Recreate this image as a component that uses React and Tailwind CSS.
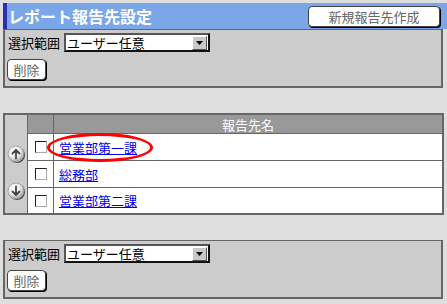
import React from "react";

const Button = ({ children, className = "" }) => (
  <div
    className={`flex items-center justify-center h-[21px] bg-white rounded-[4px] border border-[#444] shadow-[1px_1px_0_#000] text-[13px] leading-none text-[#666] ${className}`}
  >
    {children}
  </div>
);

const Select = ({ value }) => (
  <div className="flex items-center w-[146px] h-[19px] bg-white border-2 border-t-[#555] border-l-[#555] border-r-[#111] border-b-[#111]">
    <span className="flex-1 pl-[1px] text-[13px] leading-none text-black">{value}</span>
    <div className="flex items-center justify-center w-[15px] h-[14px] mr-[1px] bg-[#c8c8c8] border border-t-white border-l-white border-r-[#555] border-b-[#555]">
      <svg width="7" height="4" viewBox="0 0 7 4">
        <path d="M0 0 H7 L3.5 4 Z" fill="#000" />
      </svg>
    </div>
  </div>
);

const RangePanel = () => (
  <div className="w-[440px] h-[59px] bg-[#cccccc] border-2 border-t border-[#666] px-[3px] pt-[3px] flex flex-col gap-[7px]">
    <div className="flex items-center gap-[4px]">
      <span className="text-[13px] leading-none text-black">選択範囲</span>
      <Select value="ユーザー任意" />
    </div>
    <Button className="w-[39px] ml-[-1px]">削除</Button>
  </div>
);

const ArrowCircle = ({ down }) => (
  <svg width="19" height="19" viewBox="0 0 19 19">
    <defs>
      <radialGradient id={down ? "gd" : "gu"} cx="40%" cy="35%" r="65%">
        <stop offset="0%" stopColor="#ffffff" />
        <stop offset="60%" stopColor="#e8e8e8" />
        <stop offset="100%" stopColor="#a0a0a0" />
      </radialGradient>
    </defs>
    <circle cx="10" cy="10" r="8" fill="#444" />
    <circle cx="9" cy="9" r="8" fill={`url(#${down ? "gd" : "gu"})`} stroke="#999" strokeWidth="0.8" />
    {down ? (
      <path d="M9 4.5 V13 M5.5 9.5 L9 13 L12.5 9.5" stroke="#444" strokeWidth="1.8" fill="none" strokeLinecap="round" strokeLinejoin="round" />
    ) : (
      <path d="M9 13.5 V5 M5.5 8.5 L9 5 L12.5 8.5" stroke="#444" strokeWidth="1.8" fill="none" strokeLinecap="round" strokeLinejoin="round" />
    )}
  </svg>
);

const Checkbox = () => (
  <div className="w-[12px] h-[12px] bg-white border border-t-[#222] border-l-[#222] border-r-[#aaa] border-b-[#aaa]" />
);

const rows = ["営業部第一課", "総務部", "営業部第二課"];

export default function App() {
  return (
    <div className="w-[447px] h-[304px] bg-[#dedede] pt-[3px] pl-[3px] font-['Noto_Sans_CJK_JP',sans-serif] overflow-hidden">
      {/* Title bar */}
      <div className="flex items-center justify-between h-[26px] bg-[#7ba6e8] border-l-4 border-[#2c2cb4] pr-[7px]">
        <span className="pl-[1px] text-white text-[16px] font-bold leading-none">レポート報告先設定</span>
        <Button className="w-[132px]">新規報告先作成</Button>
      </div>

      <RangePanel />

      {/* Table */}
      <div className="relative mt-[25px] mb-[25px] w-[441px] h-[102px] flex border-2 border-[#666] bg-white">
        <div className="w-[23px] bg-[#cccccc] border-r border-[#666] flex flex-col items-center pt-[30px] gap-[18px]">
          <ArrowCircle />
          <ArrowCircle down />
        </div>
        <div className="flex-1 flex flex-col">
          <div className="flex h-[19px] bg-[#999999] border-b border-[#666]">
            <div className="w-[26px] border-r border-[#666]" />
            <div className="flex-1 flex items-center justify-center text-white text-[13px] leading-none">報告先名</div>
          </div>
          {rows.map((name, i) => (
            <div key={name} className={`flex ${i < 2 ? "h-[27px] border-b border-[#666]" : "flex-1"}`}>
              <div className="w-[26px] border-r border-[#666] flex items-center justify-center">
                <Checkbox />
              </div>
              <div className="flex-1 flex items-center pl-[5px]">
                <a href="#" className="text-[13px] leading-none text-[#0000ee] underline">{name}</a>
              </div>
            </div>
          ))}
        </div>
        {/* red highlight */}
        <div className="absolute left-[42px] top-[18px] w-[106px] h-[29px] rounded-[50%] border-[3px] border-[#ff0000]" />
      </div>

      <RangePanel />
    </div>
  );
}
